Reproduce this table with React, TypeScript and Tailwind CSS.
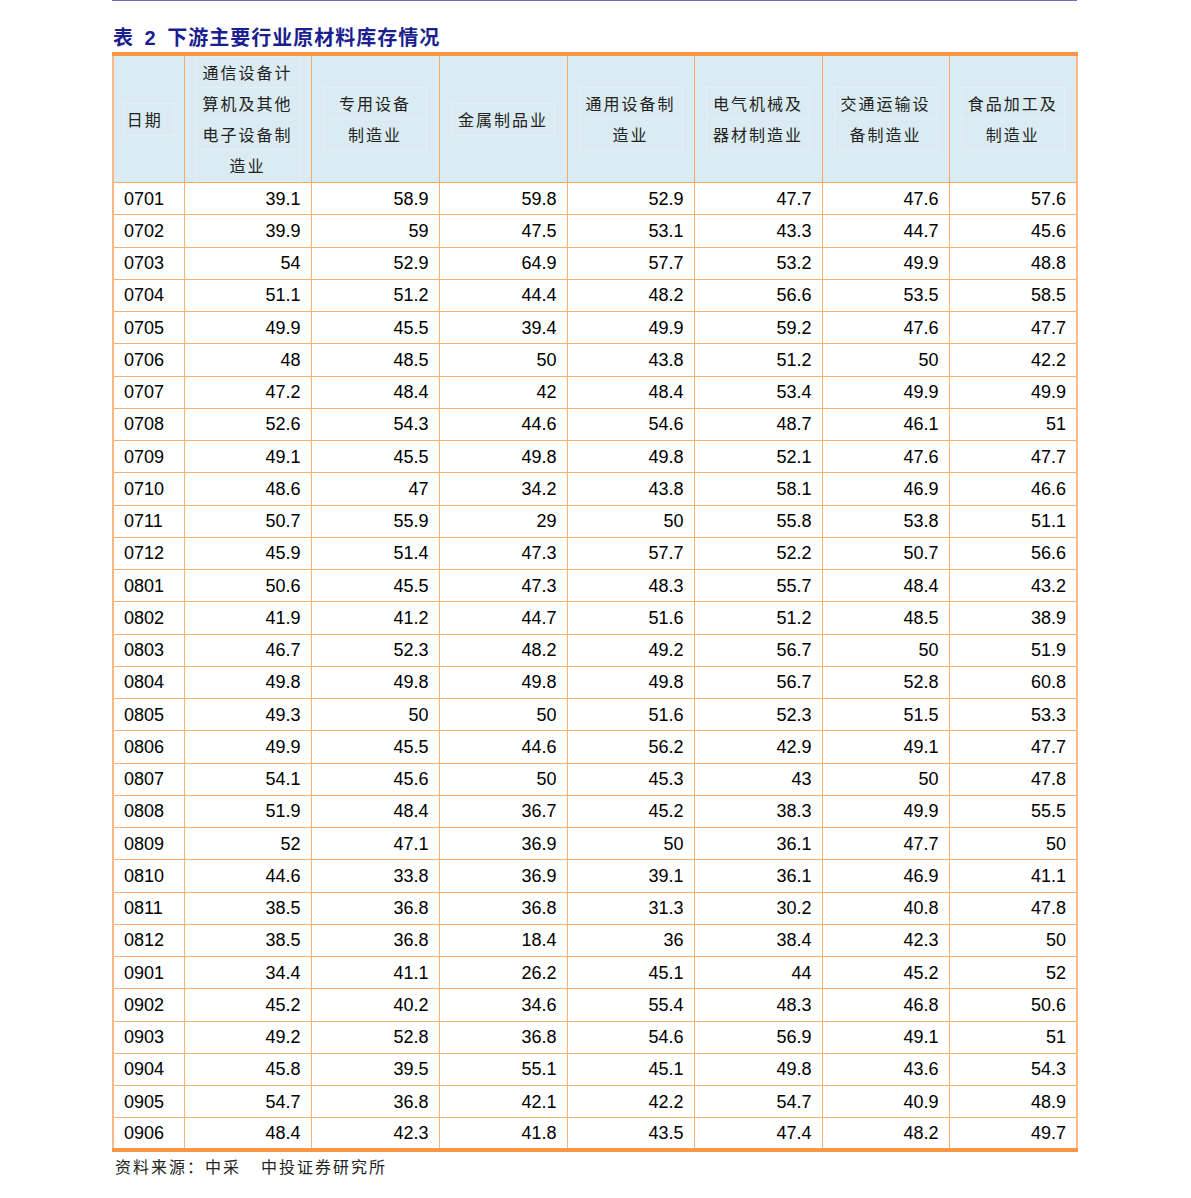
import React from 'react';

const HEADERS: string[][] = [
  ['日期'],
  ['通信设备计', '算机及其他', '电子设备制', '造业'],
  ['专用设备', '制造业'],
  ['金属制品业'],
  ['通用设备制', '造业'],
  ['电气机械及', '器材制造业'],
  ['交通运输设', '备制造业'],
  ['食品加工及', '制造业'],
];

const COL_WIDTHS = [71, 127, 128, 128, 127, 128, 127, 128];

const ROWS: string[][] = [
  ['0701', '39.1', '58.9', '59.8', '52.9', '47.7', '47.6', '57.6'],
  ['0702', '39.9', '59', '47.5', '53.1', '43.3', '44.7', '45.6'],
  ['0703', '54', '52.9', '64.9', '57.7', '53.2', '49.9', '48.8'],
  ['0704', '51.1', '51.2', '44.4', '48.2', '56.6', '53.5', '58.5'],
  ['0705', '49.9', '45.5', '39.4', '49.9', '59.2', '47.6', '47.7'],
  ['0706', '48', '48.5', '50', '43.8', '51.2', '50', '42.2'],
  ['0707', '47.2', '48.4', '42', '48.4', '53.4', '49.9', '49.9'],
  ['0708', '52.6', '54.3', '44.6', '54.6', '48.7', '46.1', '51'],
  ['0709', '49.1', '45.5', '49.8', '49.8', '52.1', '47.6', '47.7'],
  ['0710', '48.6', '47', '34.2', '43.8', '58.1', '46.9', '46.6'],
  ['0711', '50.7', '55.9', '29', '50', '55.8', '53.8', '51.1'],
  ['0712', '45.9', '51.4', '47.3', '57.7', '52.2', '50.7', '56.6'],
  ['0801', '50.6', '45.5', '47.3', '48.3', '55.7', '48.4', '43.2'],
  ['0802', '41.9', '41.2', '44.7', '51.6', '51.2', '48.5', '38.9'],
  ['0803', '46.7', '52.3', '48.2', '49.2', '56.7', '50', '51.9'],
  ['0804', '49.8', '49.8', '49.8', '49.8', '56.7', '52.8', '60.8'],
  ['0805', '49.3', '50', '50', '51.6', '52.3', '51.5', '53.3'],
  ['0806', '49.9', '45.5', '44.6', '56.2', '42.9', '49.1', '47.7'],
  ['0807', '54.1', '45.6', '50', '45.3', '43', '50', '47.8'],
  ['0808', '51.9', '48.4', '36.7', '45.2', '38.3', '49.9', '55.5'],
  ['0809', '52', '47.1', '36.9', '50', '36.1', '47.7', '50'],
  ['0810', '44.6', '33.8', '36.9', '39.1', '36.1', '46.9', '41.1'],
  ['0811', '38.5', '36.8', '36.8', '31.3', '30.2', '40.8', '47.8'],
  ['0812', '38.5', '36.8', '18.4', '36', '38.4', '42.3', '50'],
  ['0901', '34.4', '41.1', '26.2', '45.1', '44', '45.2', '52'],
  ['0902', '45.2', '40.2', '34.6', '55.4', '48.3', '46.8', '50.6'],
  ['0903', '49.2', '52.8', '36.8', '54.6', '56.9', '49.1', '51'],
  ['0904', '45.8', '39.5', '55.1', '45.1', '49.8', '43.6', '54.3'],
  ['0905', '54.7', '36.8', '42.1', '42.2', '54.7', '40.9', '48.9'],
  ['0906', '48.4', '42.3', '41.8', '43.5', '47.4', '48.2', '49.7'],
];

const CJK = "font-['Noto_Sans_CJK_SC',sans-serif]";

export default function App() {
  return (
    <div className="min-h-screen bg-white">
      <div className="ml-[112px] w-[965px]">
        {/* top rule */}
        <div className="h-px bg-[#6e6cc0]" />

        <div className={`${CJK} pt-[23px] h-[51px] text-[20px] leading-[26px] font-bold text-[#1c1f8f] tracking-[1px] pl-[1px]`}>
          表 <span className="font-['Liberation_Sans',sans-serif] font-bold mx-[5px]">2</span> 下游主要行业原材料库存情况
        </div>

        <table className="table-fixed border-collapse w-[965px] border-t-[4px] border-b-[4px] border-t-[#f79646] border-b-[#f79646] border-x-2 border-x-[#fbb987]">
          <colgroup>
            {COL_WIDTHS.map((w, i) => (
              <col key={i} style={{ width: w }} />
            ))}
          </colgroup>
          <thead>
            <tr className="h-[126px] bg-[#daebf1]">
              {HEADERS.map((lines, i) => (
                <th key={i} className={`${CJK} border border-[#f8a866] p-0 font-normal align-middle`}>
                  <div className={`mx-auto ${i === 0 ? 'w-[52px] justify-start pl-[3px]' : 'w-[104px] items-center'} flex flex-col border border-[#e4f0f4]`}>
                    {lines.map((l, j) => (
                      <div
                        key={j}
                        className={`h-[31px] leading-[31px] text-[16px] text-[#222] tracking-[2px] ${i === 0 ? 'text-left' : 'text-center'} w-full ${j < lines.length - 1 ? 'border-b border-[#e4f0f4]' : ''}`}
                      >
                        {l}
                      </div>
                    ))}
                  </div>
                </th>
              ))}
            </tr>
          </thead>
          <tbody className="font-['Liberation_Sans',Arial,sans-serif] text-[18px] text-black">
            {ROWS.map((row, r) => (
              <tr key={r} className="h-[32.25px]">
                {row.map((cell, c) => (
                  <td
                    key={c}
                    className={`border border-[#f8b173] py-0 leading-[20px] ${c === 0 ? 'text-left pl-[10px]' : 'text-right pr-[10px]'}`}
                  >
                    {cell}
                  </td>
                ))}
              </tr>
            ))}
          </tbody>
        </table>

        <div className={`${CJK} mt-[3px] pl-[3px] text-[16px] leading-[22px] text-[#222] tracking-[2px]`}>
          资料来源：中采<span className="inline-block w-[20px]" />中投证券研究所
        </div>
      </div>
    </div>
  );
}
